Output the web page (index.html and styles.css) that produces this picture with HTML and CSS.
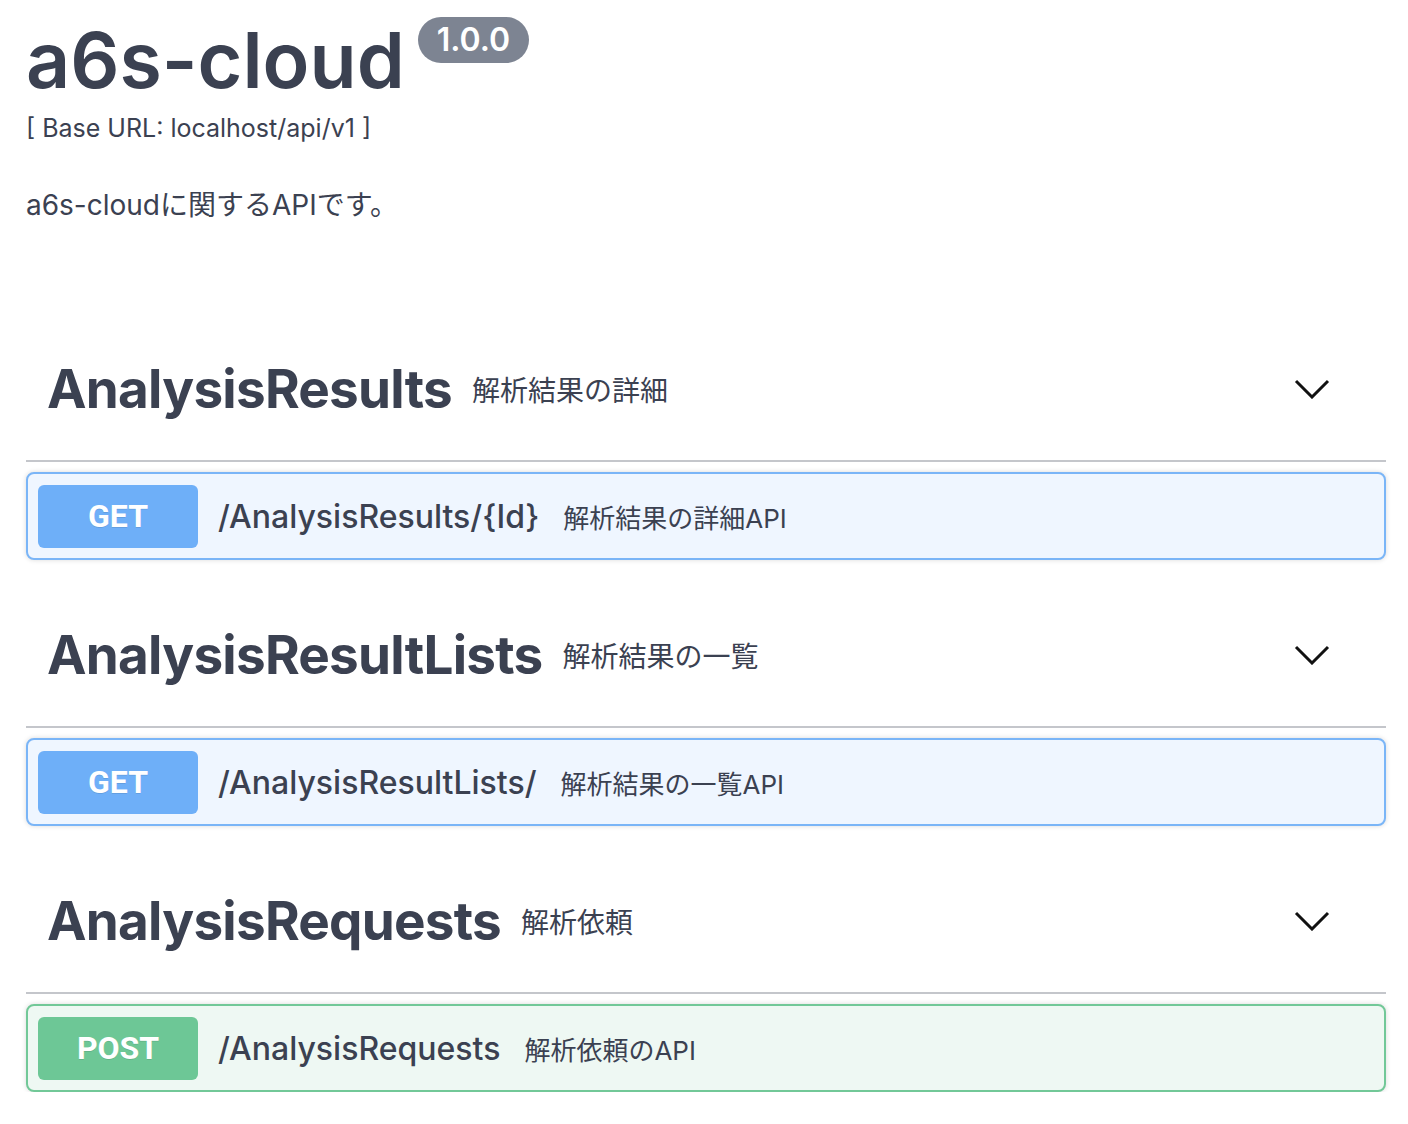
FILE: index.html
```html
<!DOCTYPE html>
<html lang="ja">
<head>
<meta charset="utf-8">
<title>a6s-cloud</title>
<link rel="stylesheet" href="styles.css">
</head>
<body>
<div class="wrap">
  <div class="info">
    <h1 class="title">a6s-cloud<span class="version">1.0.0</span></h1>
    <div class="base-url">[ Base URL: localhost/api/v1 ]</div>
    <p class="desc">a6s-cloudに関するAPIです。</p>
  </div>

  <section class="tag-section">
    <div class="tag-header">
      <h2 class="tag-name">AnalysisResults</h2>
      <span class="tag-desc">解析結果の詳細</span>
      <svg class="chevron" width="36" height="20" viewBox="0 0 36 20"><path d="M2 2 L18 18 L34 2" fill="none" stroke="#111" stroke-width="3"/></svg>
    </div>
    <div class="opblock get">
      <span class="method">GET</span>
      <span class="path">/AnalysisResults/{Id}</span>
      <span class="summary">解析結果の詳細API</span>
    </div>
  </section>

  <section class="tag-section">
    <div class="tag-header">
      <h2 class="tag-name">AnalysisResultLists</h2>
      <span class="tag-desc">解析結果の一覧</span>
      <svg class="chevron" width="36" height="20" viewBox="0 0 36 20"><path d="M2 2 L18 18 L34 2" fill="none" stroke="#111" stroke-width="3"/></svg>
    </div>
    <div class="opblock get">
      <span class="method">GET</span>
      <span class="path">/AnalysisResultLists/</span>
      <span class="summary">解析結果の一覧API</span>
    </div>
  </section>

  <section class="tag-section">
    <div class="tag-header">
      <h2 class="tag-name">AnalysisRequests</h2>
      <span class="tag-desc">解析依頼</span>
      <svg class="chevron" width="36" height="20" viewBox="0 0 36 20"><path d="M2 2 L18 18 L34 2" fill="none" stroke="#111" stroke-width="3"/></svg>
    </div>
    <div class="opblock post">
      <span class="method">POST</span>
      <span class="path">/AnalysisRequests</span>
      <span class="summary">解析依頼のAPI</span>
    </div>
  </section>
</div>
</body>
</html>
```

FILE: styles.css
```css
html, body {
  margin: 0;
  padding: 0;
  background: #fff;
}
body {
  font-family: Inter, "Noto Sans CJK JP", sans-serif;
  color: #3b4151;
}
.wrap {
  width: 1360px;
  padding: 0 22px 0 26px;
}
.info {
  padding-top: 17px;
}
.title {
  margin: 0;
  font-size: 77px;
  line-height: 86px;
  font-weight: 600;
  letter-spacing: 0;
  display: flex;
  align-items: flex-start;
}
.version {
  margin-left: 13px;
  margin-top: 0;
  background: #7d8492;
  color: #fff;
  font-size: 32px;
  line-height: 46px;
  font-weight: 600;
  padding: 0 19px;
  border-radius: 24px;
}
.base-url {
  margin-top: 10px;
  font-size: 25px;
  line-height: 30px;
}
.desc {
  margin: 44px 0 0;
  font-size: 28px;
  line-height: 36px;
}
.tag-section:first-of-type {
  margin-top: 124px;
}
.tag-section + .tag-section {
  margin-top: 53px;
}
.tag-header {
  display: flex;
  align-items: center;
  height: 84px;
  padding: 0 56px 29px 21px;
  border-bottom: 2px solid #c4c6cb;
}
.tag-name {
  margin: 0;
  font-size: 53px;
  font-weight: 700;
  letter-spacing: -0.75px;
}
.tag-desc {
  margin-left: 20px;
  font-size: 28px;
  flex: 1;
}
.chevron {
  display: block;
}
.opblock {
  margin-top: 10px;
  display: flex;
  align-items: center;
  height: 88px;
  padding: 0 10px;
  border: 2px solid;
  border-radius: 8px;
  box-shadow: 0 0 5px rgba(0,0,0,0.15);
  box-sizing: border-box;
}
.opblock.get {
  background: #eff6ff;
  border-color: #7ab5f7;
}
.opblock.post {
  background: #eef8f3;
  border-color: #72c898;
}
.method {
  width: 160px;
  height: 63px;
  border-radius: 6px;
  display: flex;
  align-items: center;
  justify-content: center;
  color: #fff;
  font-family: Roboto, "Liberation Sans", sans-serif;
  font-weight: 700;
  font-size: 32px;
  text-shadow: 0 1px 0 rgba(0,0,0,0.1);
}
.get .method { background: #6eaff8; }
.post .method { background: #6dc796; }
.path {
  margin-left: 20px;
  font-size: 32px;
  font-weight: 500;
}
.summary {
  margin-left: 24px;
  font-size: 26px;
}
```
